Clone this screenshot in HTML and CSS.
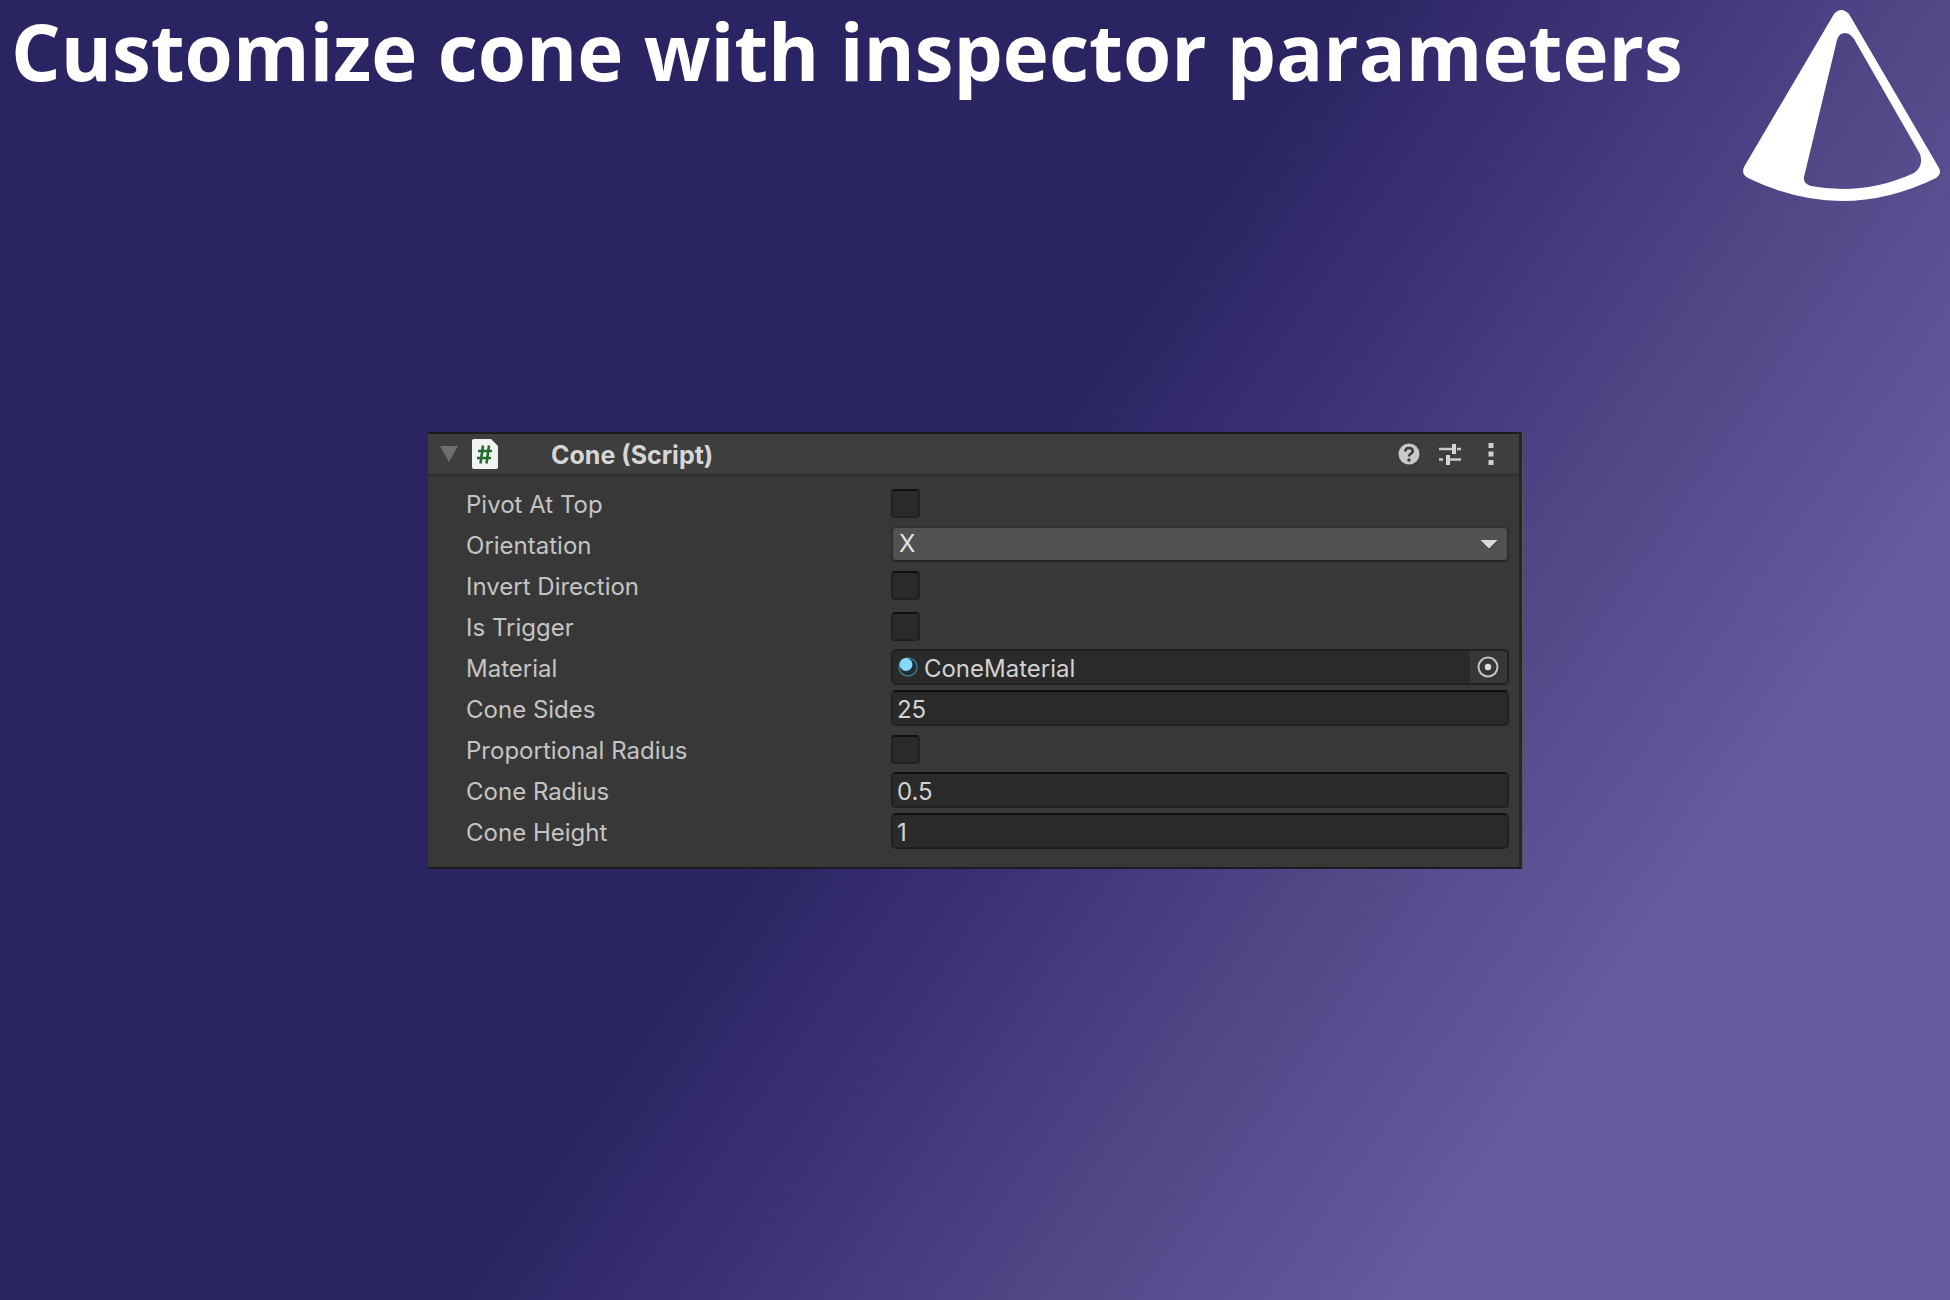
FILE: index.html
```html
<!DOCTYPE html>
<html lang="en">
<head>
<meta charset="utf-8">
<title>Customize cone with inspector parameters</title>
<link rel="stylesheet" href="styles.css">
</head>
<body>
<header class="banner">
  <h1 class="title">Customize cone with inspector parameters</h1>
  <svg class="logo" viewBox="0 0 220 210" role="img" aria-label="Cone logo">
    <path fill="#fff" fill-rule="evenodd" d="M104 14Q111 6 119 14L209 168Q212 174 206 178Q112 224 18 178Q11 174 14 167ZM107 40L74 177Q73 184 81 186Q134 196 184 173Q194 166 190 154L124 39Q120 33 115 33Q109 33 107 40Z"/>
  </svg>
</header>
<main class="stage">
  <form class="inspector">
    <div class="inspector-head">
      <svg class="foldout" viewBox="0 0 18 16"><path fill="#6e6e6e" d="M0 0H18L9 16Z"/></svg>
      <svg class="script" viewBox="0 0 26 30"><path fill="#f2f2f2" d="M2 0H19L26 7V28Q26 30 24 30H2Q0 30 0 28V2Q0 0 2 0Z"/><path fill="none" stroke="#1f6f2b" stroke-width="2.600" d="M11 6.500L8.500 24.500M17 6.500L14.500 24.500M6 12H20M5 19H19"/></svg>
      <h2 class="component">Cone (Script)</h2>
      <button type="button" class="icon-button" aria-label="Help"><svg viewBox="0 0 22 22"><circle cx="11" cy="11" r="10.500" fill="#c8c8c8"/><path fill="none" stroke="#3c3c3c" stroke-width="2.600" d="M7.200 8.500Q7.500 5 11 5T14.800 8.300C14.800 10.500 11 10.700 11 13.500"/><circle cx="11" cy="17" r="1.700" fill="#3c3c3c"/></svg></button>
      <button type="button" class="icon-button" aria-label="Presets"><svg viewBox="0 0 22 22"><path fill="none" stroke="#c8c8c8" stroke-width="2.400" d="M0 6H13M18 6H22M0 16.500H4M9 16.500H22"/><path fill="none" stroke="#d4d4d4" stroke-width="4" d="M15 1V11M9 12V22"/></svg></button>
      <button type="button" class="icon-button" aria-label="More options"><svg viewBox="0 0 22 22"><path fill="#d0d0d0" d="M8.500 0h5v5h-5zM8.500 8.500h5v5h-5zM8.500 17h5v5h-5z"/></svg></button>
    </div>
    <div class="fields">
      <div class="row"><label for="pivot">Pivot At Top</label><input class="check" type="checkbox" id="pivot"></div>
      <div class="row"><label for="orientation">Orientation</label><select class="dropdown" id="orientation"><option>X</option><option>Y</option><option>Z</option></select></div>
      <div class="row"><label for="invert">Invert Direction</label><input class="check" type="checkbox" id="invert"></div>
      <div class="row"><label for="trigger">Is Trigger</label><input class="check" type="checkbox" id="trigger"></div>
      <div class="row"><label for="material">Material</label>
        <div class="object">
          <svg class="sphere" viewBox="0 0 20 20"><circle cx="10" cy="10" r="9" fill="#1d2d35" stroke="#417288" stroke-width="1.500"/><circle cx="8" cy="7.500" r="6.500" fill="#84d9fc"/></svg>
          <input class="object-name" type="text" id="material" value="ConeMaterial">
          <button type="button" class="picker" aria-label="Select material"><svg viewBox="0 0 22 22"><circle cx="11" cy="11" r="9.500" fill="none" stroke="#c4c4c4" stroke-width="2"/><circle cx="11" cy="11" r="3.200" fill="#dcdcdc"/></svg></button>
        </div>
      </div>
      <div class="row"><label for="sides">Cone Sides</label><input class="text" type="text" id="sides" value="25"></div>
      <div class="row"><label for="proportional">Proportional Radius</label><input class="check" type="checkbox" id="proportional"></div>
      <div class="row"><label for="radius">Cone Radius</label><input class="text" type="text" id="radius" value="0.5"></div>
      <div class="row"><label for="height">Cone Height</label><input class="text" type="text" id="height" value="1"></div>
    </div>
  </form>
</main>
</body>
</html>
```
FILE: styles.css
```css
* { box-sizing: border-box; }

body {
  margin: 0;
  min-height: 100vh;
  display: grid;
  color: #c4c4c4;
  font: 24px/36px Inter, "Liberation Sans", sans-serif;
  background: linear-gradient(124.5deg, #2a2462 47%, #40367a 59%, #504585 67%, #675a9e 81%);
}

.banner, .stage { grid-area: 1 / 1; }

.banner {
  display: flex;
  justify-content: space-between;
  align-items: flex-start;
  padding-left: 11px;
}

.title {
  margin: 0;
  color: #fff;
  font: 700 78px/102px "Open Sans", sans-serif;
  white-space: nowrap;
}

.logo { width: 220px; height: 210px; flex: none; }

.stage {
  align-self: center;
  justify-self: center;
  width: 56.1%;
  min-width: 720px;
}

.inspector {
  background: #383838;
  border-top: 2px solid #1c1c1c;
  border-bottom: 2px solid #1c1c1c;
  border-right: 3px solid #262626;
  box-shadow: 1px 0 #555;
}

.inspector-head {
  display: flex;
  align-items: center;
  height: 42px;
  padding: 0 17px 0 12px;
  background: #3e3e3e;
  border-bottom: 2px solid #303030;
}

.foldout { width: 18px; height: 16px; }
.script { width: 26px; height: 30px; margin-left: 14px; }

.component {
  flex: 1;
  margin: 0 0 0 53px;
  padding-top: 2px;
  color: #d6d6d6;
  font-size: 25px;
  font-weight: 700;
}

.icon-button, .picker {
  display: grid;
  place-items: center;
  padding: 0;
  border: 0;
  background: none;
}

.icon-button { width: 22px; height: 22px; margin-left: 19px; }
.icon-button svg, .picker svg { width: 22px; height: 22px; }

.fields {
  display: grid;
  gap: 5px;
  padding: 8px 10px 19px 38px;
}

.row {
  display: grid;
  grid-template-columns: 11fr 16fr;
  align-items: center;
  height: 36px;
}

.row label { padding-top: 3px; }

.text, .dropdown, .object, .check {
  margin: 0;
  background: #2a2a2a;
  border: 2px solid #212121;
  border-radius: 5px;
  color: #d2d2d2;
  font: inherit;
}

.text, .check { appearance: none; border-top-color: #0f0f0f; }
.text { width: 100%; height: 36px; padding: 3px 4px 0; }
.check { width: 29px; height: 29px; border-radius: 4px; }

.dropdown {
  appearance: none;
  width: 100%;
  height: 36px;
  padding: 0 6px;
  line-height: 30px;
  color: #e4e4e4;
  border-color: #303030;
  border-bottom-color: #242424;
  background: #515151 conic-gradient(from -45deg at 50% 100%, #d8d8d8 90deg, transparent 0) right 10px center / 16px 8px no-repeat;
}

.object { display: flex; align-items: center; height: 36px; overflow: hidden; }
.sphere { width: 20px; height: 20px; margin-left: 5px; flex: none; }

.object-name {
  flex: 1;
  min-width: 0;
  height: 32px;
  padding: 3px 0 0 6px;
  border: 0;
  background: none;
  color: inherit;
  font: inherit;
}

.picker { width: 37px; height: 32px; background: #373737; }
```
